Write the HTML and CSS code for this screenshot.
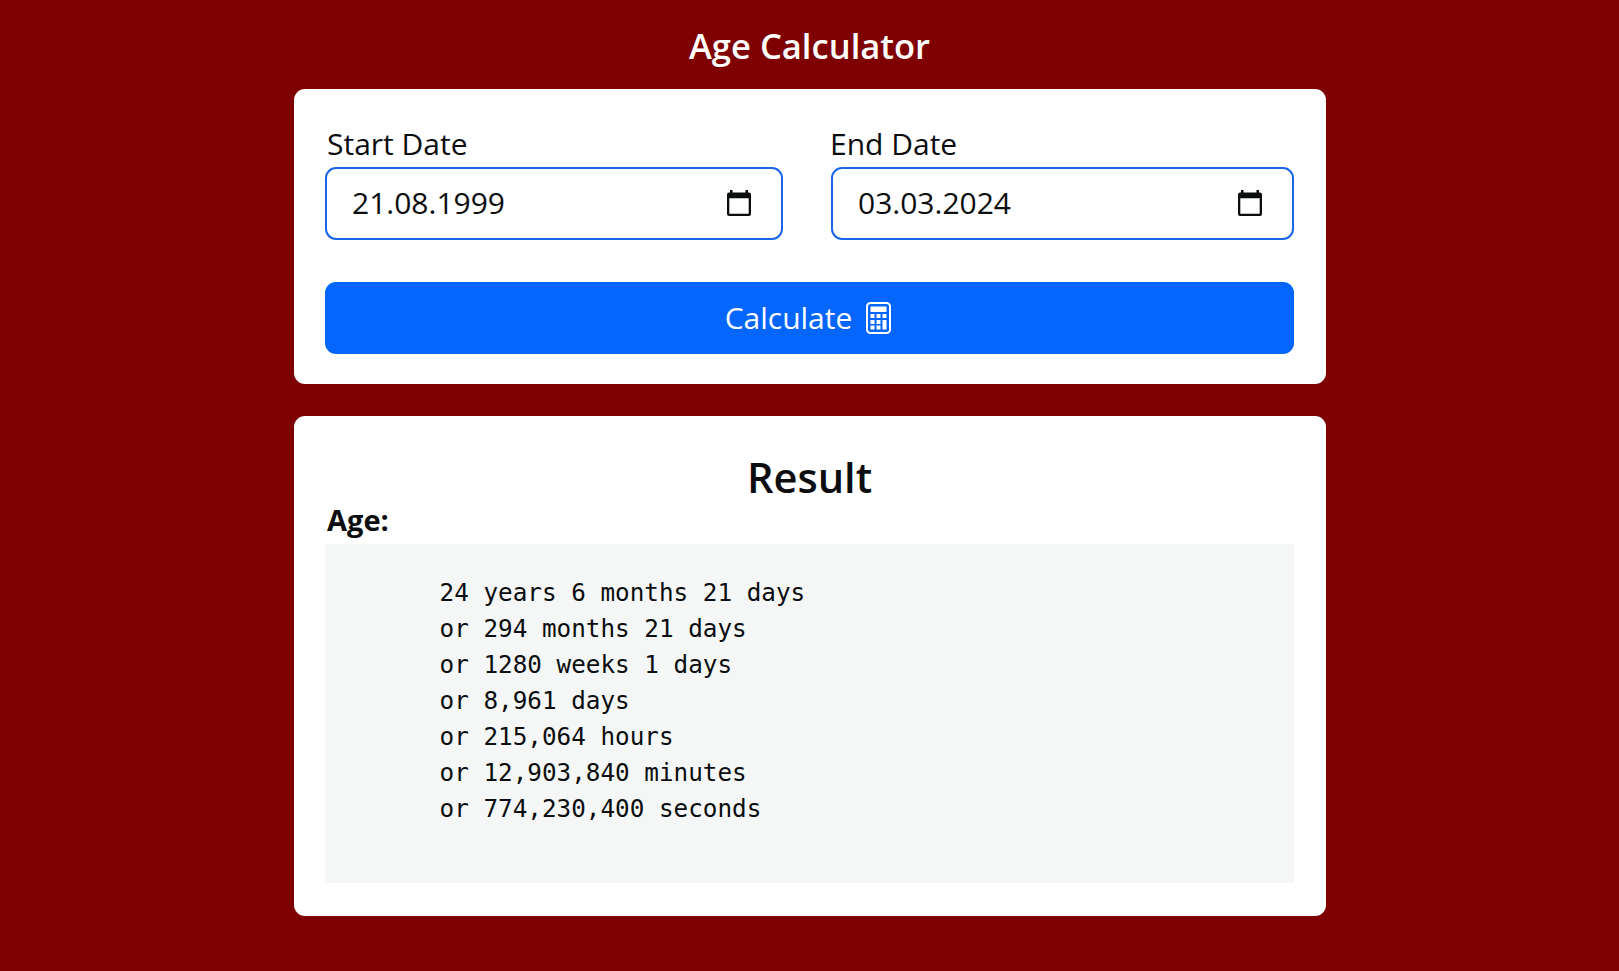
FILE: index.html
```
<!DOCTYPE html>
<html lang="en">
<head>
    <meta charset="UTF-8">
    <meta name="viewport" content="width=device-width, initial-scale=1.0">
    <title>Age Calculator</title>
    <link rel="stylesheet" href="styles.css">
</head>
<body>
    <main class="container">
        <h1 class="title">Age Calculator</h1>

        <form class="card form-card">
            <div class="row">
                <div class="field">
                    <label for="startDate">Start Date</label>
                    <div class="date-box">
                        <input type="text" id="startDate" value="21.08.1999">
                        <svg class="calendar-icon" viewBox="0 0 24 26">
                            <path d="M3 0h2.500v2.500h13V0H21v2.500h1A2 2 0 0 1 24 4.500v19.500a2 2 0 0 1-2 2h-20A2 2 0 0 1 0 24v-19.500A2 2 0 0 1 2 2.500H3zM2.300 8.200v15.500h19.400V8.200z"/>
                        </svg>
                    </div>
                </div>
                <div class="field end-field">
                    <label for="endDate">End Date</label>
                    <div class="date-box">
                        <input type="text" id="endDate" value="03.03.2024">
                        <svg class="calendar-icon" viewBox="0 0 24 26">
                            <path d="M3 0h2.500v2.500h13V0H21v2.500h1A2 2 0 0 1 24 4.500v19.500a2 2 0 0 1-2 2h-20A2 2 0 0 1 0 24v-19.500A2 2 0 0 1 2 2.500H3zM2.300 8.200v15.500h19.400V8.200z"/>
                        </svg>
                    </div>
                </div>
            </div>
            <button type="button" class="btn">
                <span>Calculate</span>
                <svg class="calc-icon" viewBox="0 0 25 32">
                    <rect x="1" y="1" width="23" height="30" rx="3.500" fill="none" stroke="currentColor" stroke-width="2"/>
                    <path fill="currentColor" d="M4.500 4.500h16v5.500h-16zM4.500 12h4v4h-4zM10.500 12h4v4h-4zM16.500 12h4v4h-4zM4.500 18h4v4h-4zM10.500 18h4v4h-4zM4.500 23.500h4v4h-4zM10.500 23.500h4v4h-4zM16.500 18h4v9.500h-4z"/>
                </svg>
            </button>
        </form>

        <div class="card result-card">
            <h2>Result</h2>
            <strong class="age-label">Age:</strong>
<pre class="output">24 years 6 months 21 days
or 294 months 21 days
or 1280 weeks 1 days
or 8,961 days
or 215,064 hours
or 12,903,840 minutes
or 774,230,400 seconds</pre>
        </div>
    </main>
</body>
</html>
```

FILE: styles.css
```
* { box-sizing: border-box; }
body { font-family: "Open Sans", sans-serif; font-size: 30px; line-height: 44px; color: #0b0d0e; background: #7f0000; margin: 0; }
.container { width: 1032px; margin: 0 auto; padding-top: 20px; }
.title { margin: 0 0 17px; font-size: 34.600px; line-height: 52px; font-weight: 600; color: #fff; text-align: center; }
.card { background: #fff; border-radius: 11px; padding: 32px 31.500px; }
.form-card { height: 295px; margin-bottom: 32px; }
.row { display: grid; grid-template-columns: 458px 463px; justify-content: space-between; }
.field label { display: block; height: 46px; line-height: 46px; padding-left: 2px; }
.end-field label { padding-left: 0; margin-left: -1px; }
.date-box { display: flex; align-items: center; justify-content: space-between; height: 73px; padding: 0 30px 0 25px; border: 2px solid #1a66ea; border-radius: 11px; }
.date-box input { width: 300px; padding: 0; margin-bottom: 1px; border: none; outline: none; background: none; font: inherit; color: inherit; }
.calendar-icon { width: 24px; height: 26px; fill: #0b0d0e; fill-rule: evenodd; margin-bottom: 2px; }
.btn { display: flex; align-items: center; justify-content: center; gap: 14px; width: 100%; height: 72px; margin-top: 42px; padding: 0 3px 0 0; border: none; border-radius: 11px; background: #0466fd; color: #fff; font: inherit; cursor: pointer; }
.calc-icon { width: 25px; height: 32px; }
.result-card { height: 500px; }
.result-card h2 { margin: 0; font-size: 41.600px; line-height: 58px; font-weight: 600; text-align: center; }
.age-label { display: block; height: 38px; font-size: 29px; line-height: 28px; padding-left: 2px; }
.output { height: 338.500px; margin: 0; padding: 31px 0 0 114.500px; background: #f5f7f7; font-family: "DejaVu Sans Mono", monospace; font-size: 24.300px; line-height: 36px; }
```
